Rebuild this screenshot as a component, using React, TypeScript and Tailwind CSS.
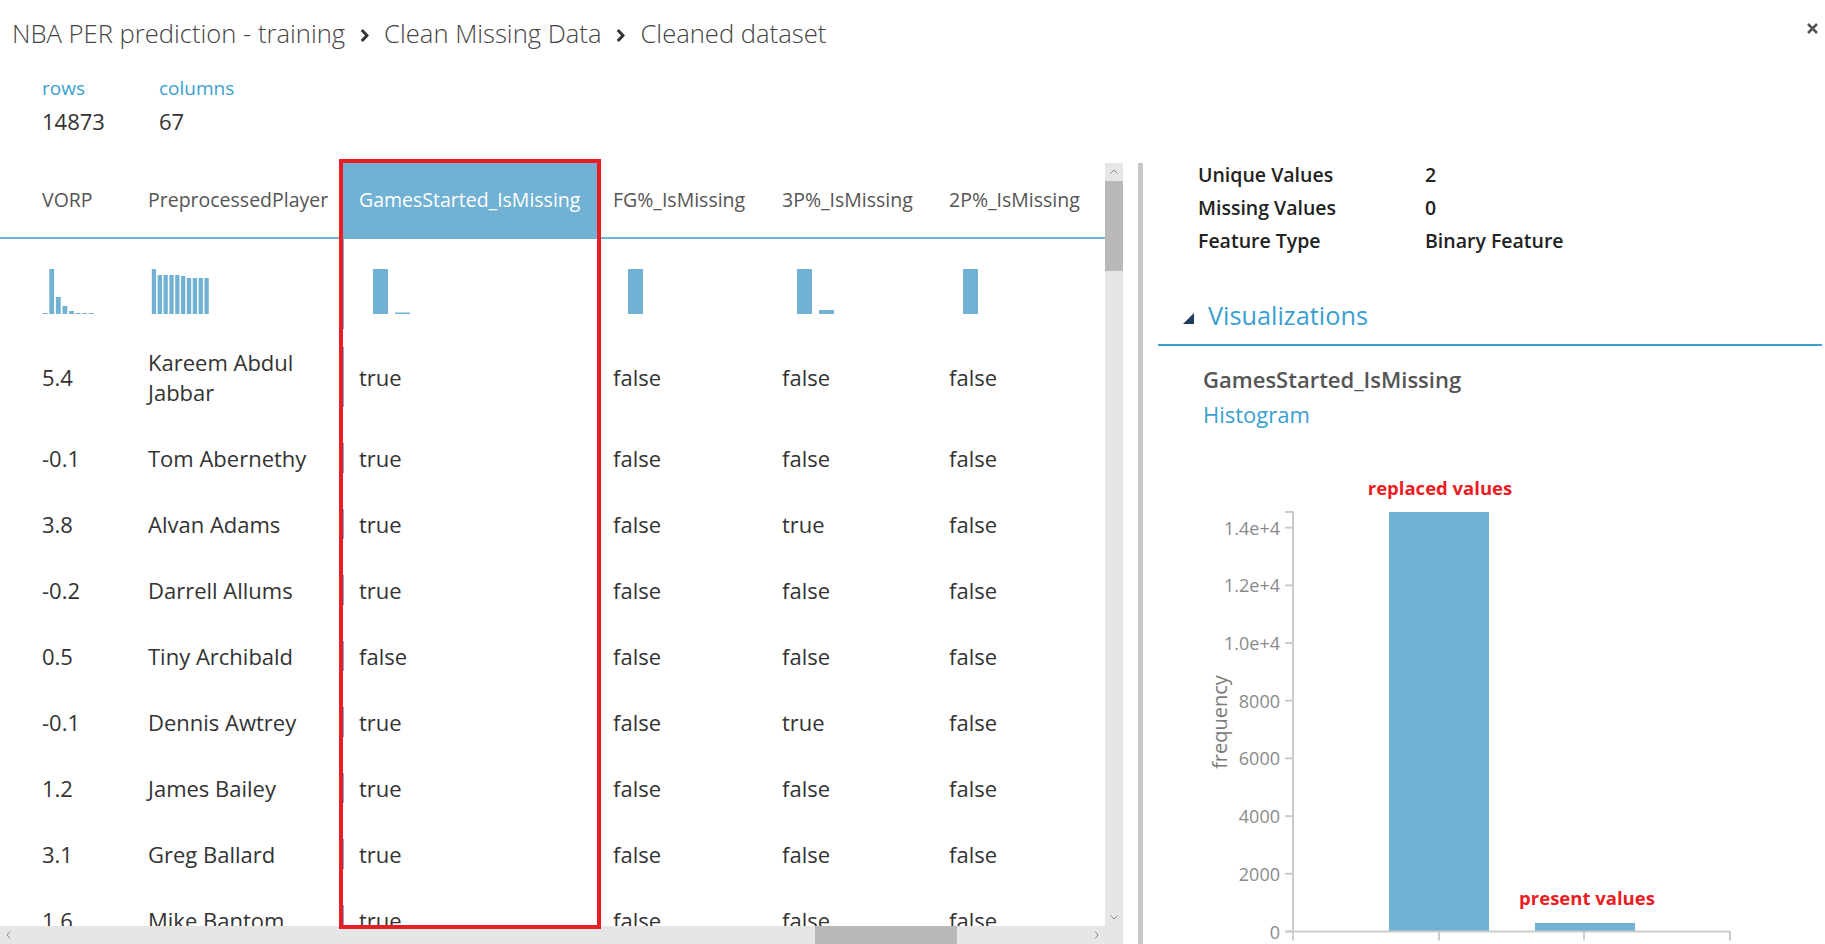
import React from 'react'

type Bar = { x: number; w: number; h: number }

type Column = {
    key: string;
    title: string;
    width: string;
    bars: Bar[];
}

const BAR_BLUE = '#71b1d3'

const columns: Column[] = [
    {
        key: 'vorp', title: 'VORP', width: 'w-[106px]',
        bars: [1, 45, 17, 8, 3, 1, 1, 1].map((h, i) => ({ x: 0.7 + i * 6.6, w: 4.8, h })),
    },
    {
        key: 'player', title: 'PreprocessedPlayer', width: 'w-[211px]',
        bars: [45, 39, 39, 39, 39, 38, 36, 36, 36, 36].map((h, i) => ({ x: 3.8 + i * 5.85, w: 4.3, h })),
    },
    {
        key: 'gs', title: 'GamesStarted_IsMissing', width: 'w-[254px]',
        bars: [{ x: 14, w: 15, h: 45 }, { x: 36, w: 15, h: 1.5 }],
    },
    { key: 'fg', title: 'FG%_IsMissing', width: 'w-[169px]', bars: [{ x: 15, w: 15, h: 45 }] },
    {
        key: 'p3', title: '3P%_IsMissing', width: 'w-[167px]',
        bars: [{ x: 15, w: 15, h: 45 }, { x: 37, w: 15, h: 4 }],
    },
    { key: 'p2', title: '2P%_IsMissing', width: 'w-[172px]', bars: [{ x: 14, w: 15, h: 45 }] },
]

const rows: string[][] = [
    ['5.4', 'Kareem Abdul Jabbar', 'true', 'false', 'false', 'false'],
    ['-0.1', 'Tom Abernethy', 'true', 'false', 'false', 'false'],
    ['3.8', 'Alvan Adams', 'true', 'false', 'true', 'false'],
    ['-0.2', 'Darrell Allums', 'true', 'false', 'false', 'false'],
    ['0.5', 'Tiny Archibald', 'false', 'false', 'false', 'false'],
    ['-0.1', 'Dennis Awtrey', 'true', 'false', 'true', 'false'],
    ['1.2', 'James Bailey', 'true', 'false', 'false', 'false'],
    ['3.1', 'Greg Ballard', 'true', 'false', 'false', 'false'],
    ['1.6', 'Mike Bantom', 'true', 'false', 'false', 'false'],
]

const stats = [
    ['Unique Values', '2'],
    ['Missing Values', '0'],
    ['Feature Type', 'Binary Feature'],
]

function Chevron() {
    return (
        <svg width="9" height="15" viewBox="0 0 9 15" className="mx-[15px] mt-[2px] shrink-0">
            <path d="M1.8 2 L7 7.5 L1.8 13" fill="none" stroke="#333" strokeWidth="3" />
        </svg>
    )
}

function MiniHist({ bars }: { bars: Bar[] }) {
    return (
        <svg width="70" height="45" className="block">
            {bars.map((b, i) => (
                <rect key={i} x={b.x} y={45 - b.h} width={b.w} height={b.h} fill={BAR_BLUE} />
            ))}
        </svg>
    )
}

function ScrollArrow({ d }: { d: string }) {
    return (
        <div className="w-[18px] h-[18px] shrink-0 flex items-center justify-center">
            <svg width="10" height="10" viewBox="0 0 10 10">
                <path d={d} fill="none" stroke="#8a8a8a" strokeWidth="1" />
            </svg>
        </div>
    )
}

function DataTable() {
    return (
        <div className="relative flex w-[1123px] h-[781px] shrink-0">
            {/* table + horizontal scrollbar */}
            <div className="flex flex-col w-[1105px]">
                <div className="h-[763px] overflow-hidden">
                    {/* header */}
                    <div className="flex pl-[26px] h-[76px] border-b-2 border-[#71b1d3]">
                        {columns.map((c) => (
                            <div
                                key={c.key}
                                className={`${c.width} shrink-0 pl-[16px] flex items-center whitespace-nowrap text-[19.5px] ${
                                    c.key === 'gs' ? 'bg-[#71b1d3] text-white' : 'text-[#555]'
                                }`}
                            >
                                {c.title}
                            </div>
                        ))}
                    </div>
                    {/* mini histograms */}
                    <div className="flex pl-[26px] h-[90px]">
                        {columns.map((c) => (
                            <div
                                key={c.key}
                                className={`${c.width} shrink-0 flex items-end pb-[15px] ${
                                    c.key === 'gs' ? 'border-l border-[#71b1d3] pl-[15px]' : 'pl-[16px]'
                                }`}
                            >
                                <MiniHist bars={c.bars} />
                            </div>
                        ))}
                    </div>
                    {/* rows */}
                    {rows.map((r, ri) => (
                        <div key={ri} className="flex pl-[26px] min-h-[66px] py-[18px] text-[22px] leading-[30px] text-[#333]">
                            {r.map((v, ci) => (
                                <div
                                    key={ci}
                                    className={`${columns[ci].width} shrink-0 pr-[16px] flex items-center ${
                                        ci === 2 ? 'border-l border-[#71b1d3] pl-[15px]' : 'pl-[16px]'
                                    }`}
                                >
                                    {v}
                                </div>
                            ))}
                        </div>
                    ))}
                </div>
                {/* horizontal scrollbar */}
                <div className="flex h-[18px] bg-[#e6e6e6]">
                    <ScrollArrow d="M6 1.5 L3 5 L6 8.5" />
                    <div className="flex-1">
                        <div className="ml-[797px] w-[142px] h-full bg-[#b9b9b9]" />
                    </div>
                    <ScrollArrow d="M4 1.5 L7 5 L4 8.5" />
                </div>
            </div>

            {/* vertical scrollbar */}
            <div className="flex flex-col w-[18px] bg-[#e6e6e6]">
                <ScrollArrow d="M1.5 6.5 L5 3 L8.5 6.5" />
                <div className="h-[90px] bg-[#b9b9b9]" />
                <div className="flex-1" />
                <ScrollArrow d="M1.5 3.5 L5 7 L8.5 3.5" />
                <div className="h-[18px]" />
            </div>

            {/* annotation box over the selected column */}
            <div className="absolute left-[339px] top-[-4px] w-[262px] h-[770px] border-[4px] border-[#ec1c24] pointer-events-none" />
        </div>
    )
}

function Histogram() {
    const y0 = 503.5
    const step = 57.7
    const ticks = ['0', '2000', '4000', '6000', '8000', '1.0e+4', '1.2e+4', '1.4e+4']
    return (
        <svg width="682" height="516" className="block">
            {/* y axis */}
            <path d={`M142 84 H150 V${y0} H142`} fill="none" stroke="#cccccc" strokeWidth="2" />
            {ticks.map((t, i) => {
                const y = y0 - i * step
                return (
                    <g key={t}>
                        <line x1="142" x2="150" y1={y} y2={y} stroke="#cccccc" strokeWidth="2" />
                        <text x="137" y={y} textAnchor="end" dominantBaseline="central" fontSize="18" fill="#8a8a8a">
                            {t}
                        </text>
                    </g>
                )
            })}
            <text
                transform="translate(76 294) rotate(-90)"
                textAnchor="middle"
                dominantBaseline="central"
                fontSize="20"
                fill="#7a7a7a"
            >
                frequency
            </text>

            {/* bars */}
            <rect x="246" y="84" width="100" height={y0 - 84} fill={BAR_BLUE} />
            <rect x="392" y="495" width="100" height={y0 - 495} fill={BAR_BLUE} />

            {/* x axis */}
            <path d={`M150 ${y0} H587`} fill="none" stroke="#cccccc" strokeWidth="2" />
            {[150, 296, 441, 587].map((x) => (
                <line key={x} x1={x} x2={x} y1={y0} y2={y0 + 9} stroke="#cccccc" strokeWidth="2" />
            ))}

            {/* annotations */}
            <text x="297" y="59" textAnchor="middle" dominantBaseline="central" fontSize="18.5" fontWeight="700" fill="#ec1c24">
                replaced values
            </text>
            <text x="444" y="469" textAnchor="middle" dominantBaseline="central" fontSize="18.5" fontWeight="700" fill="#ec1c24">
                present values
            </text>
        </svg>
    )
}

function DetailPanel() {
    return (
        <div className="flex-1 flex flex-col">
            <div className="pl-[55px] flex flex-col gap-[9px] text-[19.5px] font-semibold text-[#222] leading-[24px]">
                {stats.map(([k, v]) => (
                    <div key={k} className="flex">
                        <div className="w-[227px] shrink-0">{k}</div>
                        <div>{v}</div>
                    </div>
                ))}
            </div>

            <div className="mt-[44px] ml-[15px] mr-[3px] pl-[25px] pb-[11px] border-b-2 border-[#3d9fcb] flex items-center">
                <svg width="11" height="11" viewBox="0 0 11 11" className="mt-[6px] shrink-0">
                    <polygon points="11,0 11,11 0,11" fill="#1f3d5c" />
                </svg>
                <span className="ml-[14px] text-[25.3px] leading-[36px] text-[#3a9fd0]">Visualizations</span>
            </div>

            <div className="pl-[60px] mt-[19px] text-[22px] leading-[28px] font-semibold text-[#555]">
                GamesStarted_IsMissing
            </div>
            <div className="pl-[60px] mt-[7px] text-[22px] leading-[28px] text-[#3a9fd0]">Histogram</div>

            <Histogram />
        </div>
    )
}

export default function App() {
    return (
        <div className="w-[1825px] h-[944px] bg-white overflow-hidden font-['Open_Sans','Noto_Sans',sans-serif]">
            {/* breadcrumb */}
            <div className="flex h-[68px] pl-[12px] pr-[6px]">
                <div className="flex-1 flex items-center text-[25.6px] font-light text-[#444] whitespace-nowrap">
                    <span>NBA PER prediction - training</span>
                    <Chevron />
                    <span>Clean Missing Data</span>
                    <Chevron />
                    <span>Cleaned dataset</span>
                </div>
                <svg width="13" height="11" viewBox="0 0 13 11" className="mt-[23px] shrink-0">
                    <path d="M2 1 L11 10 M11 1 L2 10" stroke="#555" strokeWidth="2.6" />
                </svg>
            </div>

            {/* dataset size */}
            <div className="h-[95px] pl-[42px] pt-[7px]">
                <div className="grid grid-cols-[117px_auto] w-fit">
                    <div className="text-[19px] leading-[26px] text-[#3a9fd0]">rows</div>
                    <div className="text-[19px] leading-[26px] text-[#3a9fd0]">columns</div>
                    <div className="mt-[6px] text-[22px] leading-[28px] text-[#333]">14873</div>
                    <div className="mt-[6px] text-[22px] leading-[28px] text-[#333]">67</div>
                </div>
            </div>

            {/* body */}
            <div className="flex h-[781px]">
                <DataTable />
                <div className="w-[15px] shrink-0" />
                <div className="w-[5px] shrink-0 bg-[#c8c8c8]" />
                <DetailPanel />
            </div>
        </div>
    )
}
